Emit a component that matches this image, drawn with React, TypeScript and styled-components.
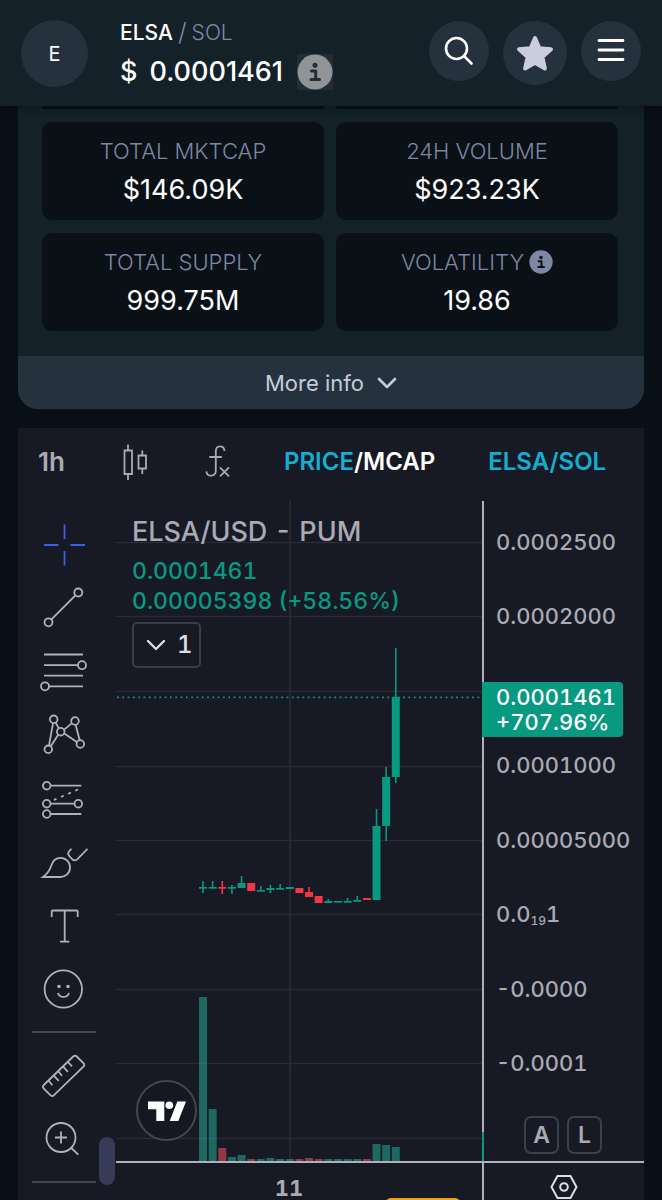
import React from "react";
import styled, { createGlobalStyle } from "styled-components";

const color = {
  page: "#090f16",
  surface: "#142129",
  raised: "#25323d",
  card: "#091016",
  muted: "#7d86a2",
  soft: "#c5cbdb",
  chart: "#171925",
  line: "#b0b1bc",
  axisText: "#a9aab3",
  grid: "#292b36",
  up: "#089981",
  down: "#f23645",
  upVolume: "#22ab94",
  downVolume: "#f7525f",
  cyan: "#13aed0",
};

const GlobalStyle = createGlobalStyle`
  * { box-sizing: border-box; }
  html { background: ${color.page}; }
  body { margin: 0; font-family: Inter, "Liberation Sans", sans-serif; color: #fff; }
  button { font: inherit; color: inherit; background: none; border: 0; padding: 0; cursor: pointer; }
  svg { display: block; }
`;

const Page = styled.div`
  height: 100vh;
  min-height: 700px;
  overflow: hidden;
  display: flex;
  flex-direction: column;
`;

const Header = styled.header`
  display: flex;
  flex: none;
  align-items: flex-start;
  height: 106px;
  padding: 20px 21px 0;
  background: ${color.surface};
  box-shadow: 0 2px 8px rgba(0, 0, 0, 0.35);
  z-index: 1;
`;

const Avatar = styled.div`
  display: grid;
  place-items: center;
  width: 67px;
  height: 67px;
  border-radius: 50%;
  background: ${color.raised};
  font-size: 20px;
`;

const Title = styled.div`
  flex: 1;
  margin-left: 32px;
`;

const Pair = styled.div`
  display: flex;
  gap: 5px;
  font-size: 21px;
  line-height: 25px;
  font-weight: 500;
`;

const Quote = styled.span`
  color: ${color.muted};
  font-weight: 300;
`;

const Slash = styled(Quote)`
  font-size: 25px;
`;

const Price = styled.div`
  display: flex;
  align-items: center;
  gap: 12px;
  margin-top: 9px;
  font-size: 27px;
  line-height: 36px;
  font-weight: 500;
`;

const InfoButton = styled.button`
  display: grid;
  place-items: center;
  width: 36px;
  height: 36px;
  margin-left: 2px;
  background: #222d36;
`;

const Actions = styled.div`
  display: flex;
  gap: 14px;
  align-items: flex-start;
  padding-top: 1px;
`;

const RoundButton = styled.button<{ $size: number }>`
  display: grid;
  place-items: center;
  width: ${(p) => p.$size}px;
  height: ${(p) => p.$size}px;
  border-radius: 50%;
  background: ${color.raised};
`;

const Panel = styled.section`
  flex: none;
  margin: 0 18px;
  border-radius: 0 0 20px 20px;
  background: ${color.surface};
  overflow: hidden;
`;

const Stats = styled.dl`
  display: grid;
  grid-template-columns: 1fr 1fr;
  gap: 13px 12px;
  margin: 0;
  padding: 0 26px 25px 24px;
`;

const CardEdge = styled.div`
  height: 3px;
  border-radius: 0 0 10px 10px;
  background: ${color.card};
`;

const StatCard = styled.div`
  display: flex;
  flex-direction: column;
  align-items: center;
  height: 98px;
  padding-top: 13px;
  border-radius: 10px;
  background: ${color.card};
`;

const StatLabel = styled.dt`
  display: flex;
  align-items: center;
  gap: 5px;
  font-size: 22px;
  line-height: 32px;
  font-weight: 300;
  color: ${color.muted};
`;

const StatValue = styled.dd`
  margin: 5px 0 0;
  font-size: 27px;
  line-height: 36px;
`;

const MoreInfo = styled.button`
  display: flex;
  align-items: center;
  justify-content: center;
  gap: 13px;
  width: 100%;
  height: 53px;
  background: ${color.raised};
  color: ${color.soft};
  font-size: 22px;
`;

const ChartPanel = styled.section`
  flex: 1;
  margin: 19px 18px 0;
  background: ${color.chart};
  overflow: hidden;
`;

const Toolbar = styled.div`
  display: flex;
  align-items: center;
  gap: 53px;
  height: 73px;
  padding: 0 20px 6px;
  font-size: 24px;
  white-space: nowrap;
  color: ${color.axisText};
`;

const ToolbarButton = styled.button<{ $accent?: boolean }>`
  color: ${(p) => (p.$accent ? color.cyan : "inherit")};
  font-weight: 600;
`;

const Interval = styled(ToolbarButton)`
  font-size: 26px;
`;

const White = styled.span`
  color: #fff;
`;

const ChartBody = styled.div`
  display: flex;
`;

const Sidebar = styled.nav`
  position: relative;
  flex: none;
  width: 98px;
  padding: 12px 20px 0 14px;
  color: ${color.line};
`;

const ToolGroup = styled.div<{ $height: number }>`
  display: grid;
  grid-auto-rows: 1fr;
  height: ${(p) => p.$height}px;
`;

const Tool = styled.button<{ $active?: boolean }>`
  display: grid;
  place-items: center;
  min-height: 0;
  color: ${(p) => (p.$active ? "#3d5fe8" : "inherit")};
`;

const Divider = styled.hr`
  height: 2px;
  margin: 10px 0;
  border: 0;
  background: #434550;
`;

const DragHandle = styled.div`
  position: absolute;
  right: 1px;
  top: 636px;
  width: 16px;
  height: 48px;
  border-radius: 8px;
  background: #363b58;
`;

const PaneColumn = styled.div`
  flex: 1;
  min-width: 0;
`;

const Pane = styled.div`
  position: relative;
  height: 660px;
`;

const Legend = styled.div`
  position: absolute;
  left: 16px;
  top: 12px;
  color: ${color.up};
  font-size: 23px;
  line-height: 30px;
  font-weight: 500;
  font-variant-numeric: tabular-nums;
  white-space: nowrap;
`;

const Symbol = styled.div`
  margin-bottom: 5px;
  font-size: 27px;
  line-height: 38px;
  color: ${color.axisText};
`;

const Collapse = styled.button`
  display: flex;
  align-items: center;
  gap: 10px;
  width: 69px;
  height: 46px;
  margin: 6px 0 0;
  padding-left: 11px;
  border: 2px solid #3a3c47;
  border-radius: 5px;
  background: ${color.chart};
  color: #dcdde6;
  font-size: 24px;
`;

const TvBadge = styled.a`
  position: absolute;
  left: 20px;
  bottom: 20px;
`;

const TimeAxis = styled.div`
  position: relative;
  height: 39px;
  border-top: 2px solid ${color.line};
  overflow: hidden;
`;

const TimeLabel = styled.div`
  width: 346px;
  padding-top: 12px;
  font-size: 22px;
  line-height: 26px;
  font-weight: 700;
  font-variant-numeric: tabular-nums;
  text-align: center;
  color: ${color.axisText};
`;

const GoldButton = styled.button`
  position: absolute;
  left: 269px;
  top: 35px;
  width: 76px;
  height: 40px;
  border-radius: 6px;
  background: #f59e0b;
`;

const PriceAxis = styled.div`
  position: relative;
  flex: none;
  width: 162px;
  border-left: 2px solid ${color.line};
  color: ${color.axisText};
`;

const Scale = styled.div`
  display: flex;
  flex-direction: column;
  height: 660px;
  padding-top: 4px;
`;

const Ticks = styled.ol`
  display: grid;
  grid-auto-rows: 1fr;
  align-items: center;
  height: 596px;
  margin: 0;
  padding: 0 0 0 12px;
  list-style: none;
  font-size: 22px;
  line-height: 25px;
  font-weight: 500;
  font-variant-numeric: tabular-nums;
`;

const Small = styled.sub`
  font-size: 12px;
  line-height: 12px;
  vertical-align: -3px;
`;

const PriceTag = styled.div`
  position: absolute;
  left: -2px;
  top: 181px;
  width: 141px;
  padding: 3px 0 2px 14px;
  border-radius: 0 4px 4px 0;
  background: ${color.up};
  color: #fff;
  font-size: 22px;
  line-height: 25px;
  font-weight: 500;
  font-variant-numeric: tabular-nums;
`;

const ScaleButtons = styled.div`
  display: flex;
  gap: 8px;
  padding: 15px 0 0 40px;
`;

const ScaleButton = styled.button`
  width: 35px;
  height: 38px;
  border: 2px solid #3d3f4a;
  border-radius: 7px;
  font-size: 23px;
  font-weight: 600;
`;

const AxisMark = styled.div`
  position: absolute;
  left: -2px;
  top: 631px;
  width: 2px;
  height: 29px;
  background: ${color.up};
`;

const AxisSettings = styled.div`
  display: flex;
  justify-content: center;
  height: 39px;
  padding-top: 11px;
  border-top: 2px solid ${color.line};
  color: #dcdde6;
`;

const BASELINE = 660;
const PITCH = 9.64;
const FIRST = 87;

/* Each candle: direction, high, body top, body bottom, low, volume height. */
const candles: [boolean, number, number, number, number, number][] = [
  [true, 380, 386, 387, 392, 164],
  [true, 380, 386, 387, 387, 52],
  [false, 380, 386, 387, 393, 13],
  [true, 384, 386, 387, 393, 4],
  [true, 375, 382, 387, 387, 6],
  [false, 382, 382, 390, 390, 2],
  [true, 385, 389, 390, 390, 2],
  [true, 384, 387, 389, 392, 3],
  [true, 383, 387, 388, 388, 2],
  [true, 386, 386, 388, 388, 2],
  [false, 387, 387, 392, 392, 2],
  [false, 386, 391, 396, 396, 3],
  [false, 395, 395, 402, 402, 2],
  [true, 398, 400, 402, 402, 2],
  [true, 400, 400, 401, 401, 2],
  [true, 397, 400, 401, 401, 2],
  [true, 395, 399, 400, 400, 2],
  [false, 397, 397, 399, 399, 2],
  [true, 308, 325, 399, 399, 17],
  [true, 266, 276, 325, 340, 16],
  [true, 147, 196, 276, 282, 14],
];

const gridRows = [41, 115, 190, 265, 339, 413, 488, 562, 637];

function Plot() {
  return (
    <svg width="100%" height={BASELINE} aria-label="Price chart">
      {gridRows.map((y) => (
        <line key={y} x1="0" x2="100%" y1={y + 0.5} y2={y + 0.5} stroke={color.grid} strokeWidth="1.7" />
      ))}
      <line x1="174" x2="174" y1="0" y2={BASELINE} stroke={color.grid} strokeWidth="1.7" />
      {candles.map(([up, high, top, bottom, low, vol], i) => {
        const x = FIRST + i * PITCH;
        return (
          <g key={i} fill={up ? color.up : color.down}>
            <rect
              x={x - 4}
              y={BASELINE - vol}
              width="8"
              height={vol}
              opacity="0.55"
              fill={up ? color.upVolume : color.downVolume}
            />
            <rect x={x - 0.8} y={high} width="1.6" height={low - high} />
            <rect x={x - 4} y={top} width="8" height={Math.max(bottom - top, 1.7)} />
          </g>
        );
      })}
      <line x1="1" x2="100%" y1="196.3" y2="196.3" stroke={color.up} strokeWidth="1.8" strokeDasharray="1.8 3.5" />
    </svg>
  );
}

function Icon({ children }: { children: React.ReactNode }) {
  return (
    <svg width="48" height="48" viewBox="0 0 48 48" fill="none" stroke="currentColor" strokeWidth="1.8" aria-hidden="true">
      {children}
    </svg>
  );
}

function InfoGlyph({ size, fill, ink }: { size: number; fill: string; ink: string }) {
  return (
    <svg width={size} height={size} viewBox="0 0 36 36" aria-hidden="true">
      <circle cx="18" cy="18" r="17.5" fill={fill} />
      <circle cx="18" cy="11.3" r="2.5" fill={ink} />
      <path d="M14.5 17h4.2v8M14 25.5h8.5" fill="none" stroke={ink} strokeWidth="3" strokeLinecap="round" strokeLinejoin="round" />
    </svg>
  );
}

function Chevron({ size, width }: { size: number; width: number }) {
  return (
    <svg width={size} height="14" viewBox="0 0 20 14" fill="none" stroke="currentColor" strokeWidth={width} strokeLinecap="round" strokeLinejoin="round" aria-hidden="true">
      <path d="M2 3l8 8 8-8" />
    </svg>
  );
}

const drawingTools: [string, React.ReactNode][] = [
  ["Crosshair", <path d="M4 24h14.5M30.5 24H45M24.5 3.500V18M24.5 30v14.5" />],
  ["Trend line", <><circle cx="38.3" cy="8.5" r="4" /><circle cx="8.5" cy="38.3" r="4" /><path d="M11.4 35.4l24-24" /></>],
  ["Fib retracement", <><path d="M4 6.500h39M4 17.200h34M4 27.700h39M9 38.300h34" /><circle cx="42" cy="17.2" r="4" /><circle cx="5" cy="38.3" r="4" /></>],
  ["Pattern", <><path d="M13 12.300L9 34.300M15.700 11.800l3 5.300M24.200 18.600l7.400-6.200M18.200 23.800l-7.400 11.400M24.300 22.600l12.500 8.300M35.700 14l3.900 15" /><circle cx="13.7" cy="8.3" r="3.8" /><circle cx="35" cy="10" r="3.8" /><circle cx="20.7" cy="20.7" r="3.8" /><circle cx="8.3" cy="38.3" r="3.8" /><circle cx="40.3" cy="33" r="3.8" /></>],
  ["Forecast", <><path d="M10.700 10.700h30.600M10.700 28.700h23.600M10.700 39h30.600" /><circle cx="6.7" cy="10.7" r="3.8" /><circle cx="6.7" cy="28.7" r="3.8" /><circle cx="38.3" cy="28.7" r="3.8" /><circle cx="6.7" cy="39" r="3.8" /><path d="M14.500 24.700L38 14.500" strokeDasharray="1.5 6.3" strokeLinecap="round" /></>],
  ["Brush", <><path d="M3 39C8 35.500 10 32 11.500 27 13 22 16.500 19.800 20.500 19.800A9.500 9.500 0 0 1 30 29.500 9.500 9.500 0 0 1 20 39H3z" /><path d="M31.500 10.800l-1.800 1.800q-3 3 0 6l2.500 2.600q2.700 2.300 5.300 0L47.500 10.800" /></>],
  ["Text", <path d="M11.700 15V9.500q0-1 1-1h24q1 0 1 1V15M24.700 9v30.700M20 39.700h9.300" />],
  ["Emoji", <><circle cx="23.3" cy="24" r="18.7" /><circle cx="19" cy="21.5" r="0.9" fill="currentColor" /><circle cx="28" cy="21.5" r="0.9" fill="currentColor" /><path d="M18 28a5.800 5.800 0 0 0 11 0" /></>],
];

const viewTools: [string, React.ReactNode][] = [
  ["Measure", <><path d="M33.200 5.500q1.800-1.800 3.600 0l6.600 6.600q1.800 1.800 0 3.600L14 44.200q-1.800 1.800-3.600 0l-6.600-6.600q-1.800-1.800 0-3.600z" /><path d="M8.600 29.500l3.700 4.700M13.800 24.600l5 5.300M18.400 20.500l3.600 4.300M23.200 15.700l4.700 5.200M28 11l4 4.300" /></>],
  ["Zoom in", <><circle cx="21" cy="22.5" r="14.5" /><path d="M15 22.500h12M21 16.500v12M31.300 33l7 6.700" /></>],
];

const ticks: React.ReactNode[] = [
  "0.0002500",
  "0.0002000",
  null,
  "0.0001000",
  "0.00005000",
  <>0.0<Small>19</Small>1</>,
  "-0.0000",
  "-0.0001",
];

function Stat({ label, value, info }: { label: string; value: string; info?: boolean }) {
  return (
    <StatCard>
      <StatLabel>
        {label}
        {info && <InfoGlyph size={24} fill={color.muted} ink={color.card} />}
      </StatLabel>
      <StatValue>{value}</StatValue>
    </StatCard>
  );
}

export default function App() {
  return (
    <>
      <GlobalStyle />
      <Page>
        <Header>
          <Avatar>E</Avatar>
          <Title>
            <Pair>
              ELSA <Slash>/</Slash> <Quote>SOL</Quote>
            </Pair>
            <Price>
              <span>$</span>
              <span>0.0001461</span>
              <InfoButton aria-label="Price details">
                <InfoGlyph size={36} fill="#8f9497" ink="#222d36" />
              </InfoButton>
            </Price>
          </Title>
          <Actions>
            <RoundButton $size={60} aria-label="Search">
              <svg width="30" height="30" viewBox="0 0 30 30" fill="none" stroke="#fff" strokeWidth="2.6" strokeLinecap="round">
                <circle cx="12.5" cy="12.5" r="10.5" />
                <path d="M20 20l7.500 7.500" />
              </svg>
            </RoundButton>
            <RoundButton $size={64} aria-label="Favourite">
              <svg width="38" height="38" viewBox="0 0 38 38" fill="#c9cddc" stroke="#c9cddc" strokeWidth="4" strokeLinejoin="round">
                <path d="M19 4l4.400 10.200 11.600 1-8.700 7.700 2.600 11.600L19 28.700 9.100 34.500l2.600-11.600L3 15.200l11.600-1z" />
              </svg>
            </RoundButton>
            <RoundButton $size={60} aria-label="Menu">
              <svg width="28" height="28" viewBox="0 0 28 28" fill="none" stroke="#fff" strokeWidth="2.8" strokeLinecap="round">
                <path d="M2 3.500h24M2 13h24M2 22.500h24" />
              </svg>
            </RoundButton>
          </Actions>
        </Header>

        <Panel>
          <Stats>
            <CardEdge />
            <CardEdge />
            <Stat label="TOTAL MKTCAP" value="$146.09K" />
            <Stat label="24H VOLUME" value="$923.23K" />
            <Stat label="TOTAL SUPPLY" value="999.75M" />
            <Stat label="VOLATILITY" value="19.86" info />
          </Stats>
          <MoreInfo>
            More info
            <Chevron size={20} width={2.6} />
          </MoreInfo>
        </Panel>

        <ChartPanel>
          <Toolbar>
            <Interval>1h</Interval>
            <ToolbarButton aria-label="Chart type">
              <svg width="30" height="40" viewBox="0 0 30 40" fill="none" stroke="currentColor" strokeWidth="1.8">
                <path d="M6.500 8.500h7.500v23.500H6.500zM10 2.500v6M10 32v6M20.500 13.500H28v13h-7.500zM24.300 8.500v5M24.300 26.500v5.500" />
              </svg>
            </ToolbarButton>
            <ToolbarButton aria-label="Indicators">
              <svg width="30" height="40" viewBox="0 0 30 40" fill="none" stroke="currentColor" strokeWidth="1.8">
                <path d="M23.500 9C23 3 14.800 2.500 14.800 9.500v19c0 6.500-8.500 7-9.500.8M8.300 15h12.500M19 25.300l9 9M28 25.300l-9 9" />
              </svg>
            </ToolbarButton>
            <ToolbarButton $accent>
              PRICE<White>/MCAP</White>
            </ToolbarButton>
            <ToolbarButton $accent>ELSA/SOL</ToolbarButton>
          </Toolbar>

          <ChartBody>
            <Sidebar aria-label="Drawing tools">
              <ToolGroup $height={508}>
                {drawingTools.map(([name, shape], i) => (
                  <Tool key={name} aria-label={name} $active={i === 0}>
                    <Icon>{shape}</Icon>
                  </Tool>
                ))}
              </ToolGroup>
              <Divider />
              <ToolGroup $height={128}>
                {viewTools.map(([name, shape]) => (
                  <Tool key={name} aria-label={name}>
                    <Icon>{shape}</Icon>
                  </Tool>
                ))}
              </ToolGroup>
              <Divider />
              <DragHandle />
            </Sidebar>

            <PaneColumn>
              <Pane>
                <Plot />
                <Legend>
                  <Symbol>ELSA/USD - PUM</Symbol>
                  <div>0.0001461</div>
                  <div>0.00005398 (+58.56%)</div>
                  <Collapse>
                    <Chevron size={22} width={2.4} />1
                  </Collapse>
                </Legend>
                <TvBadge href="#" aria-label="TradingView">
                  <svg width="61" height="61" viewBox="0 0 61 61">
                    <circle cx="30.5" cy="30.5" r="29.500" fill="#151722" stroke="#454650" strokeWidth="2" />
                    <path d="M12 21.500h16.300V41h-8V29.300H12zM41.300 21.500H50L42.300 41h-8.600z" fill="#fff" />
                    <circle cx="33.3" cy="25.3" r="3.8" fill="#fff" />
                  </svg>
                </TvBadge>
              </Pane>
              <TimeAxis>
                <TimeLabel>11</TimeLabel>
                <GoldButton aria-label="Open trade panel" />
              </TimeAxis>
            </PaneColumn>

            <PriceAxis>
              <Scale>
                <Ticks>
                  {ticks.map((t, i) => (
                    <li key={i}>{t}</li>
                  ))}
                </Ticks>
                <ScaleButtons>
                  <ScaleButton>A</ScaleButton>
                  <ScaleButton>L</ScaleButton>
                </ScaleButtons>
              </Scale>
              <PriceTag>
                0.0001461
                <br />
                +707.96%
              </PriceTag>
              <AxisMark />
              <AxisSettings>
                <svg width="28" height="26" viewBox="0 0 28 26" fill="none" stroke="currentColor" strokeWidth="2">
                  <path d="M7.500 2h13L26.500 13l-6 11h-13l-6-11z" />
                  <circle cx="14" cy="13" r="3.8" />
                </svg>
              </AxisSettings>
            </PriceAxis>
          </ChartBody>
        </ChartPanel>
      </Page>
    </>
  );
}
